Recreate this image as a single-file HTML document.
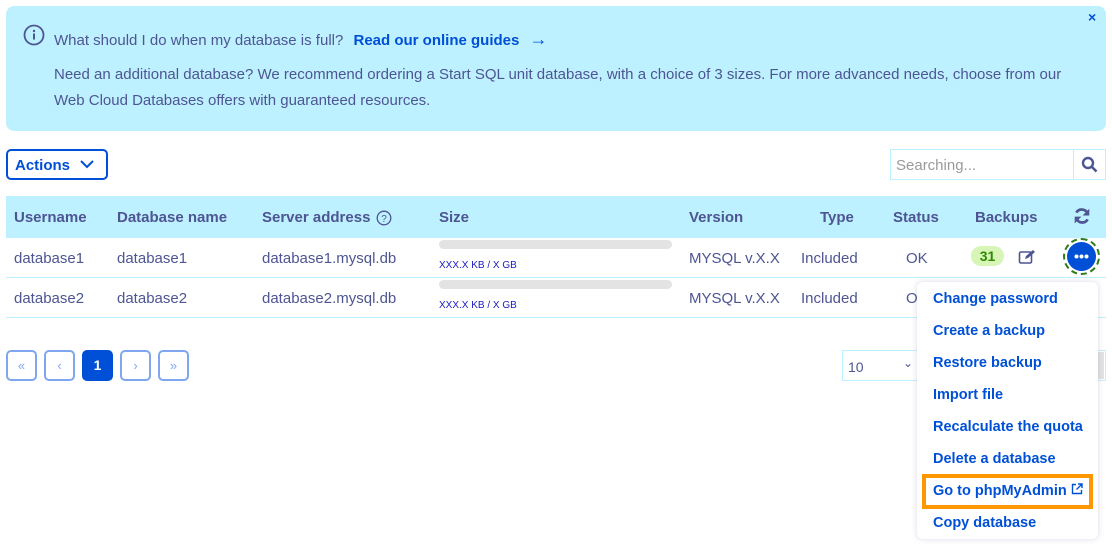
<!DOCTYPE html>
<html><head><meta charset="utf-8"><style>
*{box-sizing:border-box;margin:0;padding:0}
body{width:1112px;height:544px;background:#fff;font-family:"Liberation Sans",sans-serif;color:#4d5592;position:relative;overflow:hidden;font-size:15px}
.abs{position:absolute;white-space:nowrap}
.banner{position:absolute;left:6px;top:6px;width:1100px;height:125px;background:#bef1ff;border-radius:8px}
.link{color:#0050d7;font-weight:bold}
.th{position:absolute;font-weight:bold;font-size:15px;top:209px}
.td{position:absolute;font-size:15px}
.line{position:absolute;left:6px;width:1100px;height:1px;background:#bef1ff}
.pg{position:absolute;top:350px;width:31px;height:31px;border:2px solid #7fa6ee;border-radius:5px;color:#7fa6ee;text-align:center;line-height:27px;font-size:13px}
.menu{position:absolute;left:917px;top:282px;width:181px;height:257px;background:#fff;border-radius:6px;box-shadow:0 0 6px rgba(100,100,160,.25)}
.mi{position:absolute;left:16px;color:#0050d7;font-weight:bold;font-size:14.5px;white-space:nowrap}
.bar{position:absolute;left:439px;width:233px;height:9px;border-radius:5px;background:#e3e3e3}
.sz{position:absolute;left:439px;font-size:10px;color:#1a1ac0}
</style></head><body>
<div class="banner"></div>
<svg class="abs" style="left:23px;top:24px" width="22" height="22" viewBox="0 0 22 22"><circle cx="11" cy="11" r="9.5" fill="none" stroke="#4d5592" stroke-width="1.8"/><rect x="10" y="9.5" width="2" height="6" fill="#4d5592"/><circle cx="11" cy="7" r="1.2" fill="#4d5592"/></svg>
<div class="abs" style="left:54px;top:32px">What should I do when my database is full? <span class="link" style="margin-left:6px">Read our online guides</span> <span class="link" style="margin-left:6px;font-weight:normal;font-size:18px;line-height:15px">→</span></div>
<div class="abs" style="left:54px;top:62px;line-height:26px">Need an additional database? We recommend ordering a Start SQL unit database, with a choice of 3 sizes. For more advanced needs, choose from our<br>Web Cloud Databases offers with guaranteed resources.</div>
<div class="abs" style="left:1088px;top:9px;color:#0050d7;font-size:14px;font-weight:bold">×</div>

<div class="abs" style="left:6px;top:149px;width:102px;height:31px;border:2px solid #0050d7;border-radius:5px;color:#0050d7;font-weight:bold;padding:6px 0 0 7px">Actions
<svg style="position:absolute;left:72px;top:9px" width="14" height="9" viewBox="0 0 14 9"><path d="M1 1l6 6 6-6" fill="none" stroke="#0050d7" stroke-width="2"/></svg></div>

<div class="abs" style="left:890px;top:149px;width:216px;height:31px;border:1px solid #bef1ff"></div>
<div class="abs" style="left:1073px;top:149px;width:1px;height:31px;background:#bef1ff"></div>
<div class="abs" style="left:896px;top:157px;color:#9a9a9a">Searching...</div>
<svg class="abs" style="left:1081px;top:156px" width="17" height="17" viewBox="0 0 17 17"><circle cx="7" cy="7" r="5" fill="none" stroke="#4d5592" stroke-width="2.4"/><path d="M11 11l4.5 4.5" stroke="#4d5592" stroke-width="2.6"/></svg>

<div class="abs" style="left:6px;top:196px;width:1100px;height:42px;background:#bef1ff"></div>
<div class="th" style="left:14px">Username</div>
<div class="th" style="left:117px">Database name</div>
<div class="th" style="left:262px">Server address</div>
<svg class="abs" style="left:376px;top:210px" width="16" height="16" viewBox="0 0 16 16"><circle cx="8" cy="8" r="6.8" fill="none" stroke="#4d5592" stroke-width="1.3"/><text x="8" y="12" font-size="10" text-anchor="middle" fill="#4d5592" font-family="Liberation Sans">?</text></svg>
<div class="th" style="left:439px">Size</div>
<div class="th" style="left:689px">Version</div>
<div class="th" style="left:820px">Type</div>
<div class="th" style="left:893px">Status</div>
<div class="th" style="left:975px">Backups</div>
<svg class="abs" style="left:1073px;top:207px" width="18" height="18" viewBox="0 0 16 16"><path d="M13 6A5.5 5.5 0 0 0 3 5M3 10a5.5 5.5 0 0 0 10 1" fill="none" stroke="#4d5592" stroke-width="2.4"/><path d="M14.5 1.5v6h-6zM1.5 14.5v-6h6z" fill="#4d5592"/></svg>

<div class="td" style="left:14px;top:250px">database1</div>
<div class="td" style="left:117px;top:250px">database1</div>
<div class="td" style="left:262px;top:250px">database1.mysql.db</div>
<div class="bar" style="top:240px"></div><div class="sz" style="top:260px">XXX.X KB / X GB</div>
<div class="td" style="left:689px;top:250px">MYSQL v.X.X</div>
<div class="td" style="left:801px;top:250px">Included</div>
<div class="td" style="left:906px;top:250px">OK</div>
<div class="abs" style="left:971px;top:246px;width:33px;height:20px;border-radius:10px;background:#d8f5b8;color:#2e8a00;font-weight:bold;font-size:14px;text-align:center;line-height:20px">31</div>
<svg class="abs" style="left:1018px;top:249px" width="18" height="16" viewBox="0 0 18 16"><rect x="1.5" y="3" width="12" height="11" rx="1.5" fill="none" stroke="#4d5592" stroke-width="1.6"/><path d="M7 10l1-3 7-6 2 2-7 6z" fill="#4d5592"/></svg>
<div class="abs" style="left:1063px;top:238px;width:37px;height:37px;border-radius:50%;border:2px dashed #2e7d1a;padding:2px"><svg width="29" height="29" viewBox="0 0 29 29"><circle cx="14.5" cy="14.5" r="14.5" fill="#0050d7"/><circle cx="9.5" cy="14.5" r="2" fill="#fff"/><circle cx="14.5" cy="14.5" r="2" fill="#fff"/><circle cx="19.5" cy="14.5" r="2" fill="#fff"/></svg></div>
<div class="line" style="top:277px"></div>

<div class="td" style="left:14px;top:290px">database2</div>
<div class="td" style="left:117px;top:290px">database2</div>
<div class="td" style="left:262px;top:290px">database2.mysql.db</div>
<div class="bar" style="top:280px"></div><div class="sz" style="top:300px">XXX.X KB / X GB</div>
<div class="td" style="left:689px;top:290px">MYSQL v.X.X</div>
<div class="td" style="left:801px;top:290px">Included</div>
<div class="td" style="left:906px;top:290px">O</div>
<div class="line" style="top:317px"></div>

<div class="pg" style="left:6px">«</div>
<div class="pg" style="left:44px">‹</div>
<div class="pg" style="left:82px;background:#0050d7;border-color:#0050d7;color:#fff;font-weight:bold;font-size:14px">1</div>
<div class="pg" style="left:120px">›</div>
<div class="pg" style="left:158px">»</div>

<div class="abs" style="left:842px;top:350px;width:264px;height:31px;border:1px solid #bef1ff"></div>
<div class="abs" style="left:848px;top:359px;font-size:14px">10</div>
<div class="abs" style="left:903px;top:356px;font-size:12px">⌄</div>
<div class="abs" style="left:1098px;top:352px;width:6px;height:27px;background:#e3e3e3"></div>

<div class="menu">
<div class="mi" style="top:9px">Change password</div>
<div class="mi" style="top:41px">Create a backup</div>
<div class="mi" style="top:73px">Restore backup</div>
<div class="mi" style="top:105px">Import file</div>
<div class="mi" style="top:137px">Recalculate the quota</div>
<div class="mi" style="top:169px">Delete a database</div>
<div style="position:absolute;left:5px;top:192px;width:171px;height:35px;border:4px solid #ff9800"></div>
<div class="mi" style="top:201px">Go to phpMyAdmin <svg width="12" height="12" viewBox="0 0 12 12" style="vertical-align:0"><path d="M5 1.5H1.5v9h9V7M7 1h4v4M11 1L5.5 6.5" fill="none" stroke="#0050d7" stroke-width="1.4"/></svg></div>
<div class="mi" style="top:233px">Copy database</div>
</div>
</body></html>
